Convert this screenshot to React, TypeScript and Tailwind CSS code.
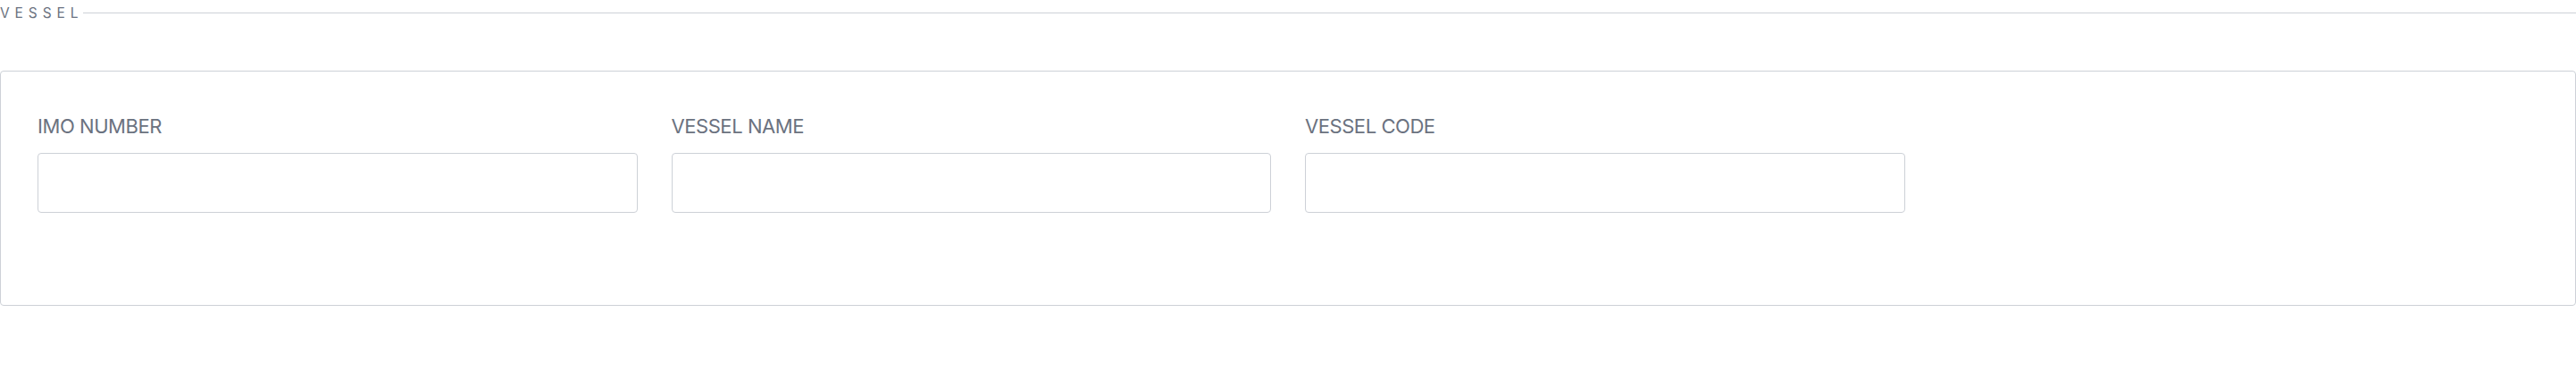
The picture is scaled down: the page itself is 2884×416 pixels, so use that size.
import React from 'react';

const fields = ['IMO NUMBER', 'VESSEL NAME', 'VESSEL CODE'];

export default function App() {
  return (
    <div className="w-full bg-white font-['Inter',sans-serif]">
      {/* Section header */}
      <div className="flex items-center h-[28px]">
        <span className="text-[15.5px] leading-[20px] tracking-[0.38em] text-[#6b7280] pt-[2px]">
          VESSEL
        </span>
        <div className="flex-1 h-px bg-[#cdd1d7]" />
      </div>

      {/* Vessel card */}
      <div className="mt-[51px] border border-[#cdd1d7] rounded-[4px] pt-[46px] pb-[103px] px-[41px]">
        <div className="grid grid-cols-4 gap-x-[38px]">
          {fields.map((label) => (
            <div key={label} className="flex flex-col">
              <label className="text-[22px] leading-[30px] tracking-[-0.02em] text-[#6b7280]">
                {label}
              </label>
              <input
                type="text"
                className="mt-[15px] h-[67px] w-full border border-[#cdd1d7] rounded-[4px] px-3 outline-none"
              />
            </div>
          ))}
        </div>
      </div>
    </div>
  );
}
